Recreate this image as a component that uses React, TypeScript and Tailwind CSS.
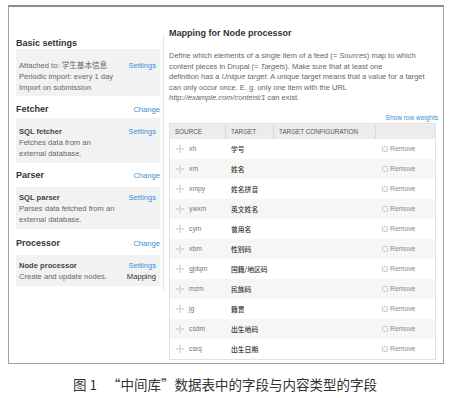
import React from "react";

const Handle = () => (
  <svg width="8" height="8" viewBox="0 0 8 8" className="shrink-0">
    <g stroke="#c0c0c0" strokeWidth="0.7" fill="none">
      <line x1="4" y1="0.5" x2="4" y2="7.5" />
      <line x1="0.5" y1="4" x2="7.5" y2="4" />
    </g>
    <g fill="#c0c0c0">
      <path d="M4 0 L5.1 1.4 L2.9 1.4 Z" />
      <path d="M4 8 L5.1 6.6 L2.9 6.6 Z" />
      <path d="M0 4 L1.4 2.9 L1.4 5.1 Z" />
      <path d="M8 4 L6.6 2.9 L6.6 5.1 Z" />
    </g>
  </svg>
);

const rows: [string, string][] = [
  ["xh", "学号"],
  ["xm", "姓名"],
  ["xmpy", "姓名拼音"],
  ["ywxm", "英文姓名"],
  ["cym", "曾用名"],
  ["xbm", "性别码"],
  ["gjdqm", "国籍/地区码"],
  ["mzm", "民族码"],
  ["jg", "籍贯"],
  ["csdm", "出生地码"],
  ["csrq", "出生日期"],
];

const link = "text-[#3d8fd6]";

export default function App() {
  return (
    <div
      className="w-[450px] h-[398px] bg-white overflow-hidden"
      style={{ fontFamily: '"Liberation Sans", Arial, "Noto Sans CJK SC", sans-serif' }}
    >
      <div className="ml-[8px] mt-[5px] w-[436px] h-[359px] border border-[#a0a0a0] border-t-2 border-t-[#8c8c8c] flex">
        {/* Left column */}
        <div className="w-[151px] pl-[7px] pt-[30px] text-[7.6px] leading-[11px] text-[#666]">
          <div className="text-[9px] leading-[12px] font-bold text-[#333]">Basic settings</div>
          <div className="bg-[#f2f2f2] pl-[3px] pr-[4px] pt-[11px] pb-[3px] flex justify-between">
            <div>
              <div>Attached to: 学生基本信息</div>
              <div>Periodic import: every 1 day</div>
              <div>Import on submission</div>
            </div>
            <div className={link}>Settings</div>
          </div>

          <div className="mt-[6px] flex justify-between items-center">
            <div className="text-[9px] leading-[12px] font-bold text-[#333]">Fetcher</div>
            <div className={`${link} mt-[2px]`}>Change</div>
          </div>
          <div className="mt-[3px] bg-[#f2f2f2] pl-[3px] pr-[4px] pt-[8px] pb-[4px] flex justify-between">
            <div>
              <div className="font-bold text-[#444]">SQL fetcher</div>
              <div>Fetches data from an</div>
              <div>external database.</div>
            </div>
            <div className={link}>Settings</div>
          </div>

          <div className="mt-[5px] flex justify-between items-center">
            <div className="text-[9px] leading-[12px] font-bold text-[#333]">Parser</div>
            <div className={`${link} mt-[2px]`}>Change</div>
          </div>
          <div className="mt-[6px] bg-[#f2f2f2] pl-[3px] pr-[4px] pt-[5px] pb-[4px] flex justify-between">
            <div>
              <div className="font-bold text-[#444]">SQL parser</div>
              <div>Parses data fetched from an</div>
              <div>external database.</div>
            </div>
            <div className={link}>Settings</div>
          </div>

          <div className="mt-[7px] flex justify-between items-center">
            <div className="text-[9px] leading-[12px] font-bold text-[#333]">Processor</div>
            <div className={`${link} mt-[2px]`}>Change</div>
          </div>
          <div className="mt-[6px] bg-[#f2f2f2] pl-[3px] pr-[4px] pt-[5px] pb-[4px] flex justify-between">
            <div>
              <div className="font-bold text-[#444]">Node processor</div>
              <div>Create and update nodes.</div>
            </div>
            <div className="flex flex-col items-end">
              <div className={link}>Settings</div>
              <div className="text-[#333]">Mapping</div>
            </div>
          </div>
        </div>

        {/* Right column */}
        <div className="flex-1 flex pl-[3px] pr-[5px]">
          <div className="w-px self-start mt-[28px] h-[255px] bg-[#e6e6e6]" />
          <div className="flex-1 pl-[5px] pt-[20px]">
            <div className="text-[9px] leading-[12px] font-bold text-[#333]">Mapping for Node processor</div>
            <div className="mt-[12px] text-[7.5px] leading-[10.6px] text-[#666] whitespace-nowrap">
              Define which elements of a single item of a feed (= <i>Sources</i>) map to which
              <br />
              content pieces in Drupal (= <i>Targets</i>). Make sure that at least one
              <br />
              definition has a <i>Unique target</i>. A unique target means that a value for a target
              <br />
              can only occur once. E. g. only one item with the URL
              <br />
              <i>http://example.com/content/1</i> can exist.
            </div>
            <div className={`mt-[9px] text-right text-[6.5px] leading-[9px] ${link}`}>Show row weights</div>
            <div className="mt-[1px] w-[267px] border border-[#e2e2e2]">
              <div className="flex h-[15px] bg-[#ececec] text-[6.3px] text-[#555] items-stretch">
                <div className="w-[56px] pl-[5px] flex items-center border-r border-[#dcdcdc]">SOURCE</div>
                <div className="w-[48px] pl-[5px] flex items-center border-r border-[#dcdcdc]">TARGET</div>
                <div className="w-[102px] pl-[5px] flex items-center border-r border-[#dcdcdc]">TARGET CONFIGURATION</div>
                <div className="flex-1" />
              </div>
              {rows.map(([s, t], i) => (
                <div
                  key={s}
                  className={`flex h-[20px] items-center text-[6.8px] ${i % 2 === 1 ? "bg-[#f6f6f4]" : "bg-white"}`}
                >
                  <div className="w-[56px] pl-[6px] flex items-center gap-[5px] text-[#777]">
                    <Handle />
                    <span>{s}</span>
                  </div>
                  <div
                    className="w-[48px] pl-[5px] text-[#333] font-medium"
                    style={{ fontFamily: '"Noto Sans CJK SC", sans-serif' }}
                  >
                    {t}
                  </div>
                  <div className="w-[102px]" />
                  <div className="flex-1 pl-[6px] flex items-center gap-[2px] text-[#888]">
                    <span className="w-[6px] h-[6px] rounded-[1.5px] border border-[#c8c8c8] bg-[#f8f8f8]" />
                    <span>Remove</span>
                  </div>
                </div>
              ))}
            </div>
          </div>
        </div>
      </div>

      <div
        className="mt-[11px] text-center text-[13.5px] leading-[18px] text-[#333]"
        style={{ fontFamily: '"Noto Sans CJK SC", sans-serif' }}
      >
        图 1<span className="ml-[10px]">“中间库”数据表中的字段与内容类型的字段</span>
      </div>
    </div>
  );
}
